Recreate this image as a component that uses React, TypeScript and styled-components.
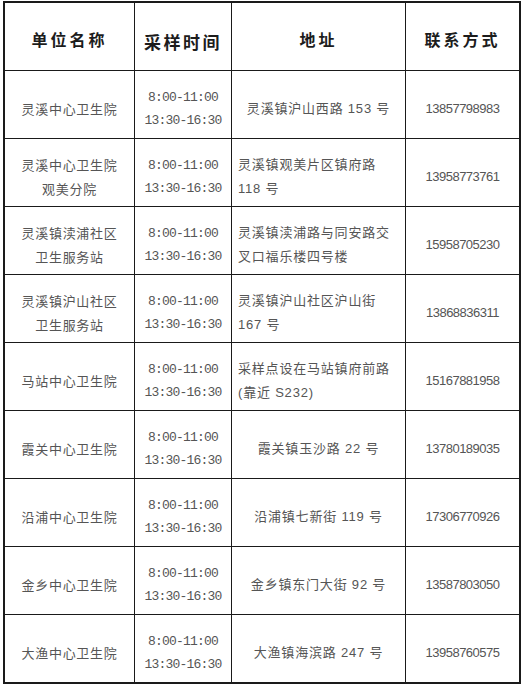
import React from "react";
import styled, { createGlobalStyle } from "styled-components";

const Global = createGlobalStyle`
  html, body { margin: 0; padding: 0; background: #ffffff; }
  body { font-family: "Liberation Sans", "Noto Sans CJK SC", sans-serif; }
`;

const Page = styled.div`
  padding: 1px 0 0 3px;
`;

const Table = styled.div`
  display: grid;
  grid-template-columns: 129px 96px 173px 113px;
  grid-auto-rows: 67px;
  gap: 1px;
  width: max-content;
  background: #1a1a1a;
  border: 2px solid #1a1a1a;
`;

const HeadCell = styled.div<{ $drop?: number; $size?: number; $space?: number }>`
  background: #fff;
  display: flex;
  align-items: center;
  justify-content: center;
  padding-top: ${(p) => (p.$drop ?? 4)}px;
  box-sizing: border-box;
  font-family: "Noto Sans CJK SC", sans-serif;
  font-weight: 700;
  font-size: ${(p) => p.$size ?? 16}px;
  letter-spacing: ${(p) => p.$space ?? 3}px;
  color: #1c1c1c;
`;

const Cell = styled.div<{ $align?: "center" | "left" }>`
  background: #fff;
  display: flex;
  flex-direction: column;
  justify-content: center;
  align-items: ${(p) => (p.$align === "left" ? "flex-start" : "center")};
  padding: 8px ${(p) => (p.$align === "left" ? "4px 0 6px" : "0 0 0")};
  box-sizing: border-box;
  color: #555;
`;

const NameLine = styled.div`
  font-family: "Noto Sans CJK SC", sans-serif;
  font-size: 13px;
  letter-spacing: 0.7px;
  line-height: 24px;
`;

const TimeLine = styled.div`
  font-family: "Liberation Mono", monospace;
  font-size: 13px;
  letter-spacing: -0.8px;
  line-height: 23px;
`;

const AddrLine = styled.div`
  font-family: "Liberation Sans", "Noto Sans CJK SC", sans-serif;
  font-size: 13px;
  letter-spacing: 0.8px;
  line-height: 24px;
  white-space: nowrap;
`;

const Phone = styled.div`
  font-family: "Liberation Sans", sans-serif;
  font-size: 13px;
  letter-spacing: -0.5px;
`;

type Row = { name: string[]; addr: string[]; phone: string; left?: boolean };

const rows: Row[] = [
  { name: ["灵溪中心卫生院"], addr: ["灵溪镇沪山西路 153 号"], phone: "13857798983" },
  { name: ["灵溪中心卫生院", "观美分院"], addr: ["灵溪镇观美片区镇府路", "118 号"], phone: "13958773761", left: true },
  { name: ["灵溪镇渎浦社区", "卫生服务站"], addr: ["灵溪镇渎浦路与同安路交", "叉口福乐楼四号楼"], phone: "15958705230", left: true },
  { name: ["灵溪镇沪山社区", "卫生服务站"], addr: ["灵溪镇沪山社区沪山街", "167 号"], phone: "13868836311", left: true },
  { name: ["马站中心卫生院"], addr: ["采样点设在马站镇府前路", "(靠近 S232)"], phone: "15167881958", left: true },
  { name: ["霞关中心卫生院"], addr: ["霞关镇玉沙路 22 号"], phone: "13780189035" },
  { name: ["沿浦中心卫生院"], addr: ["沿浦镇七新街 119 号"], phone: "17306770926" },
  { name: ["金乡中心卫生院"], addr: ["金乡镇东门大街 92 号"], phone: "13587803050" },
  { name: ["大渔中心卫生院"], addr: ["大渔镇海滨路 247 号"], phone: "13958760575" },
];

export default function App() {
  return (
    <>
      <Global />
      <Page>
        <Table>
          <HeadCell>单位名称</HeadCell>
          <HeadCell $drop={10} $size={17} $space={2.5}>采样时间</HeadCell>
          <HeadCell>地址</HeadCell>
          <HeadCell>联系方式</HeadCell>
          {rows.map((r, i) => (
            <React.Fragment key={i}>
              <Cell>
                {r.name.map((n) => (
                  <NameLine key={n}>{n}</NameLine>
                ))}
              </Cell>
              <Cell>
                <TimeLine>8:00-11:00</TimeLine>
                <TimeLine>13:30-16:30</TimeLine>
              </Cell>
              <Cell $align={r.left ? "left" : "center"}>
                {r.addr.map((a) => (
                  <AddrLine key={a}>{a}</AddrLine>
                ))}
              </Cell>
              <Cell>
                <Phone>{r.phone}</Phone>
              </Cell>
            </React.Fragment>
          ))}
        </Table>
      </Page>
    </>
  );
}
